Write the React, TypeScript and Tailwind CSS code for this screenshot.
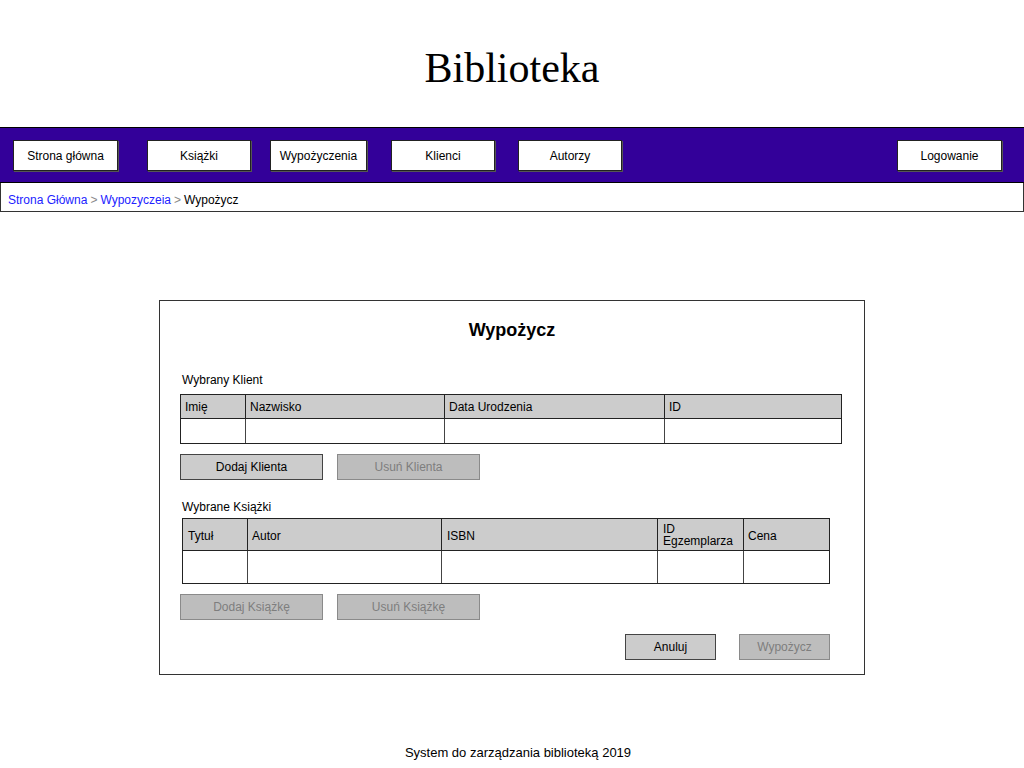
import React from "react";

const sans = { fontFamily: '"Liberation Sans", Arial, sans-serif' };

function NavBtn({ label, w, ml }: { label: string; w: string; ml: string }) {
  return (
    <div
      className={`${w} ${ml} h-[31px] bg-white border border-[#222] shadow-[1px_1px_0_#555] flex items-center justify-center text-[12px] text-black`}
    >
      {label}
    </div>
  );
}

function Btn({ label, disabled, w }: { label: string; disabled?: boolean; w: string }) {
  return (
    <div
      className={`${w} h-[26px] flex items-center justify-center text-[12px] border ${
        disabled
          ? "bg-[#bdbdbd] border-[#8a8a8a] text-[#7e7e7e]"
          : "bg-[#cccccc] border-[#444] text-black"
      }`}
    >
      {label}
    </div>
  );
}

export default function App() {
  return (
    <div className="w-[1024px] h-[768px] bg-white flex flex-col text-black" style={sans}>
      <div className="h-[127px] pt-[44px]">
        <h1
          className="text-center text-[42px] leading-[48px] font-normal"
          style={{ fontFamily: '"Liberation Serif", "Times New Roman", serif' }}
        >
          Biblioteka
        </h1>
      </div>

      <nav className="h-[56px] bg-[#330099] border-y border-black flex items-start pt-[12px]">
        <NavBtn label="Strona główna" w="w-[105px]" ml="ml-[13px]" />
        <NavBtn label="Książki" w="w-[104px]" ml="ml-[29px]" />
        <NavBtn label="Wypożyczenia" w="w-[97px]" ml="ml-[19px]" />
        <NavBtn label="Klienci" w="w-[104px]" ml="ml-[24px]" />
        <NavBtn label="Autorzy" w="w-[104px]" ml="ml-[23px]" />
        <div className="flex-1" />
        <NavBtn label="Logowanie" w="w-[105px]" ml="ml-0" />
        <div className="w-[22px]" />
      </nav>

      <div className="h-[29px] border-x border-b border-[#333] flex items-center pl-[7px] text-[12px] pt-[5px]">
        <span className="text-[#2222ff]">Strona Główna</span>
        <span className="text-[#888] mx-[3px]">&gt;</span>
        <span className="text-[#2222ff]">Wypozyczeia</span>
        <span className="text-[#888] mx-[3px]">&gt;</span>
        <span className="text-black">Wypożycz</span>
      </div>

      <div className="pt-[88px] flex justify-center">
        <div className="w-[706px] h-[375px] border border-[#333] flex flex-col px-[20px]">
          <h2 className="mt-[17px] text-center text-[18px] leading-[24px] font-bold">Wypożycz</h2>

          <div className="mt-[30px] text-[12px] leading-[16px] pl-[2px]">Wybrany Klient</div>
          <div className="mt-[6px] w-[662px] border border-[#222] text-[12px]">
            <div className="grid grid-cols-[65px_199px_220px_1fr] h-[24px] bg-[#cccccc] border-b border-[#222]">
              <div className="border-r border-[#222] flex items-center pl-[4px]">Imię</div>
              <div className="border-r border-[#222] flex items-center pl-[4px]">Nazwisko</div>
              <div className="border-r border-[#222] flex items-center pl-[4px]">Data Urodzenia</div>
              <div className="flex items-center pl-[4px]">ID</div>
            </div>
            <div className="grid grid-cols-[65px_199px_220px_1fr] h-[24px]">
              <div className="border-r border-[#444]" />
              <div className="border-r border-[#444]" />
              <div className="border-r border-[#444]" />
              <div />
            </div>
          </div>

          <div className="mt-[10px] flex gap-[14px]">
            <Btn label="Dodaj Klienta" w="w-[143px]" />
            <Btn label="Usuń Klienta" w="w-[143px]" disabled />
          </div>

          <div className="mt-[19px] text-[12px] leading-[16px] pl-[2px]">Wybrane Książki</div>
          <div className="mt-[3px] ml-[2px] w-[648px] border border-[#222] text-[12px]">
            <div className="grid grid-cols-[65px_194px_216px_86px_1fr] h-[32px] bg-[#cccccc] border-b border-[#222]">
              <div className="border-r border-[#222] flex items-center pl-[5px] pt-[2px]">Tytuł</div>
              <div className="border-r border-[#222] flex items-center pl-[4px] pt-[2px]">Autor</div>
              <div className="border-r border-[#222] flex items-center pl-[5px] pt-[2px]">ISBN</div>
              <div className="border-r border-[#222] flex flex-col justify-center pl-[5px] leading-[12px]">
                <span>ID</span>
                <span>Egzemplarza</span>
              </div>
              <div className="flex items-center pl-[4px] pt-[2px]">Cena</div>
            </div>
            <div className="grid grid-cols-[65px_194px_216px_86px_1fr] h-[32px]">
              <div className="border-r border-[#444]" />
              <div className="border-r border-[#444]" />
              <div className="border-r border-[#444]" />
              <div className="border-r border-[#444]" />
              <div />
            </div>
          </div>

          <div className="mt-[10px] flex gap-[14px]">
            <Btn label="Dodaj Książkę" w="w-[143px]" disabled />
            <Btn label="Usuń Książkę" w="w-[143px]" disabled />
          </div>

          <div className="mt-[14px] flex justify-end gap-[23px] pr-[14px]">
            <Btn label="Anuluj" w="w-[91px]" />
            <Btn label="Wypożycz" w="w-[91px]" disabled />
          </div>
        </div>
      </div>

      <div className="mt-[70px] text-center text-[13px] leading-[16px] pl-[12px]">System do zarządzania biblioteką 2019</div>
    </div>
  );
}
